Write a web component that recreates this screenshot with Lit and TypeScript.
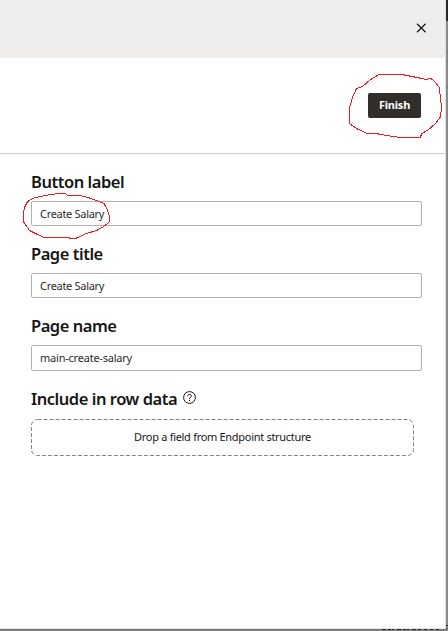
import { LitElement, html, css } from "lit";
import { customElement, property } from "lit/decorators.js";

@customElement("form-field")
class FormField extends LitElement {
  @property() label = "";
  @property() value = "";

  static styles = css`
    :host { display: block; height: 72px; }
    .label {
      box-sizing: border-box;
      height: 30px;
      font: 600 16.5px/22px "Noto Sans", sans-serif;
      letter-spacing: -0.47px;
      color: #161513;
      white-space: nowrap;
    }
    .box {
      box-sizing: border-box;
      height: 25px;
      border: 1px solid #b2b1b0;
      border-radius: 2px;
      padding-left: 8px;
      font: 400 11px/24px "Noto Sans", sans-serif;
      letter-spacing: -0.3px;
      color: #2b2927;
      white-space: nowrap;
    }
    :host([tall]) .box { height: 26px; letter-spacing: -0.22px; }
  `;

  render() {
    return html`<div class="label"><span>${this.label}</span></div>
      <div class="box"><span>${this.value}</span></div>`;
  }
}

@customElement("app-root")
class AppRoot extends LitElement {
  static styles = css`
    :host {
      display: grid;
      position: relative;
      grid-template-columns: 445px 1px 2px;
      grid-template-rows: 628px 1px 2px;
      width: 448px;
      height: 631px;
      overflow: hidden;
      background: #e3e2e1;
      font-family: "Noto Sans", sans-serif;
    }
    .panel { display: flex; flex-direction: column; background: #fff; }
    .head {
      display: flex;
      justify-content: flex-end;
      box-sizing: border-box;
      height: 58px;
      padding: 23px 19px 0 0;
      background: #efeeed;
    }
    .actions {
      display: flex;
      justify-content: flex-end;
      box-sizing: border-box;
      height: 96px;
      padding: 35px 24px 0 0;
      border-bottom: 1px solid #cfcecd;
    }
    .finish {
      width: 53px;
      height: 25px;
      border: 0;
      border-radius: 2px;
      padding: 0 0 2px;
      background: #312d2a;
      color: #fff;
      font: 700 11px/23px "Noto Sans", sans-serif;
      letter-spacing: -0.2px;
      text-align: center;
    }
    .form { padding: 17px 23px 0 31px; }
    .heading {
      display: flex;
      align-items: flex-start;
      gap: 6px;
      box-sizing: border-box;
      height: 32px;
      padding-top: 1px;
      font: 600 16.5px/22px "Noto Sans", sans-serif;
      letter-spacing: -0.46px;
      color: #161513;
      white-space: nowrap;
    }
    .help { margin-top: 3px; }
    .drop {
      display: block;
      width: 383px;
      height: 37px;
      position: relative;
      font: 400 11px/36px "Noto Sans", sans-serif;
      letter-spacing: -0.3px;
      color: #161513;
      text-align: center;
    }
    .dash { position: absolute; left: 0; top: 0; }
    .edge { grid-column: 3; grid-row: 1 / 4; background: linear-gradient(#2b2928 0 21px, #8b8988 21px 52px, #777 52px 53px, #8b8988 53px 86px, #777 86px 87px, #8b8988 87px); }
    .base { grid-column: 1 / 3; grid-row: 3; background: #7d7d7d; }
    .marks { position: absolute; left: 0; top: 0; pointer-events: none; }
  `;

  render() {
    return html`
      <div class="panel">
        <div class="head">
          <svg width="10" height="10" viewBox="0 0 10 10"><path d="M1 .8 9.6 9.2M9.6 .8 1 9.2" fill="none" stroke="#161513" stroke-width="1.2" /></svg>
        </div>
        <div class="actions"><button class="finish">Finish</button></div>
        <div class="form">
          <form-field label="Button label" value="Create Salary"></form-field>
          <form-field label="Page title" value="Create Salary"></form-field>
          <form-field tall label="Page name" value="main-create-salary"></form-field>
          <div class="heading">
            <span>Include in row data</span>
            <svg class="help" width="13" height="13" viewBox="0 0 13 13" fill="none" stroke="#161513">
              <circle cx="6.5" cy="6.5" r="5.9" stroke-width="1" />
              <path d="M4.7 5.2C4.7 2.8 8.3 2.8 8.3 5 8.3 6.4 6.5 6.3 6.5 8M6.5 8.8V10" stroke-width="1" />
            </svg>
          </div>
          <div class="drop">
            <svg class="dash" width="383" height="37"><rect x=".5" y=".5" width="382" height="36" rx="6" fill="none" stroke="#858382" stroke-dasharray="4 2" /></svg>
            <span>Drop a field from Endpoint structure</span>
          </div>
        </div>
      </div>
      <div class="edge"></div>
      <div class="base"></div>
      <svg class="marks" width="448" height="631" fill="none" stroke="#ed1c24" stroke-width="1" shape-rendering="crispEdges">
        <path d="M379 74.5H402L412 76.5 422 78.5 426 79.5 431 78.5 435 82 439 87 440.5 97 441.5 108 440.5 117 435 124 428 130 422 133.5 420 137.5H400L390 136 378.5 134 366 133 356.5 128.5 349.5 123.5V108L352.5 97.5 356.5 88.5 362.5 86.5 370 80Z" />
        <path d="M58 193.5H65.5L68.5 196 80 195.5 88 197.5 96.5 200.5 104 203.5 107.5 210 109.5 216.5 109 222.5 103 227 96.5 230.5 86.5 233.5 76.5 238H69.5L44 237.5 36.5 234 29.5 230.5 24 222.5 23.5 213.5 24.5 207.5 27.5 201.5 35 197.5 48 195Z" />
        <path d="M382 629.5H422" stroke="#292827" stroke-dasharray="4 2 3 1 2 3" />
        <path d="M424 629.5H442" stroke="#292827" stroke-dasharray="3 3" />
        <path d="M446 625.5H448M446 628.5H447" stroke="#292827" />
      </svg>
    `;
  }
}
